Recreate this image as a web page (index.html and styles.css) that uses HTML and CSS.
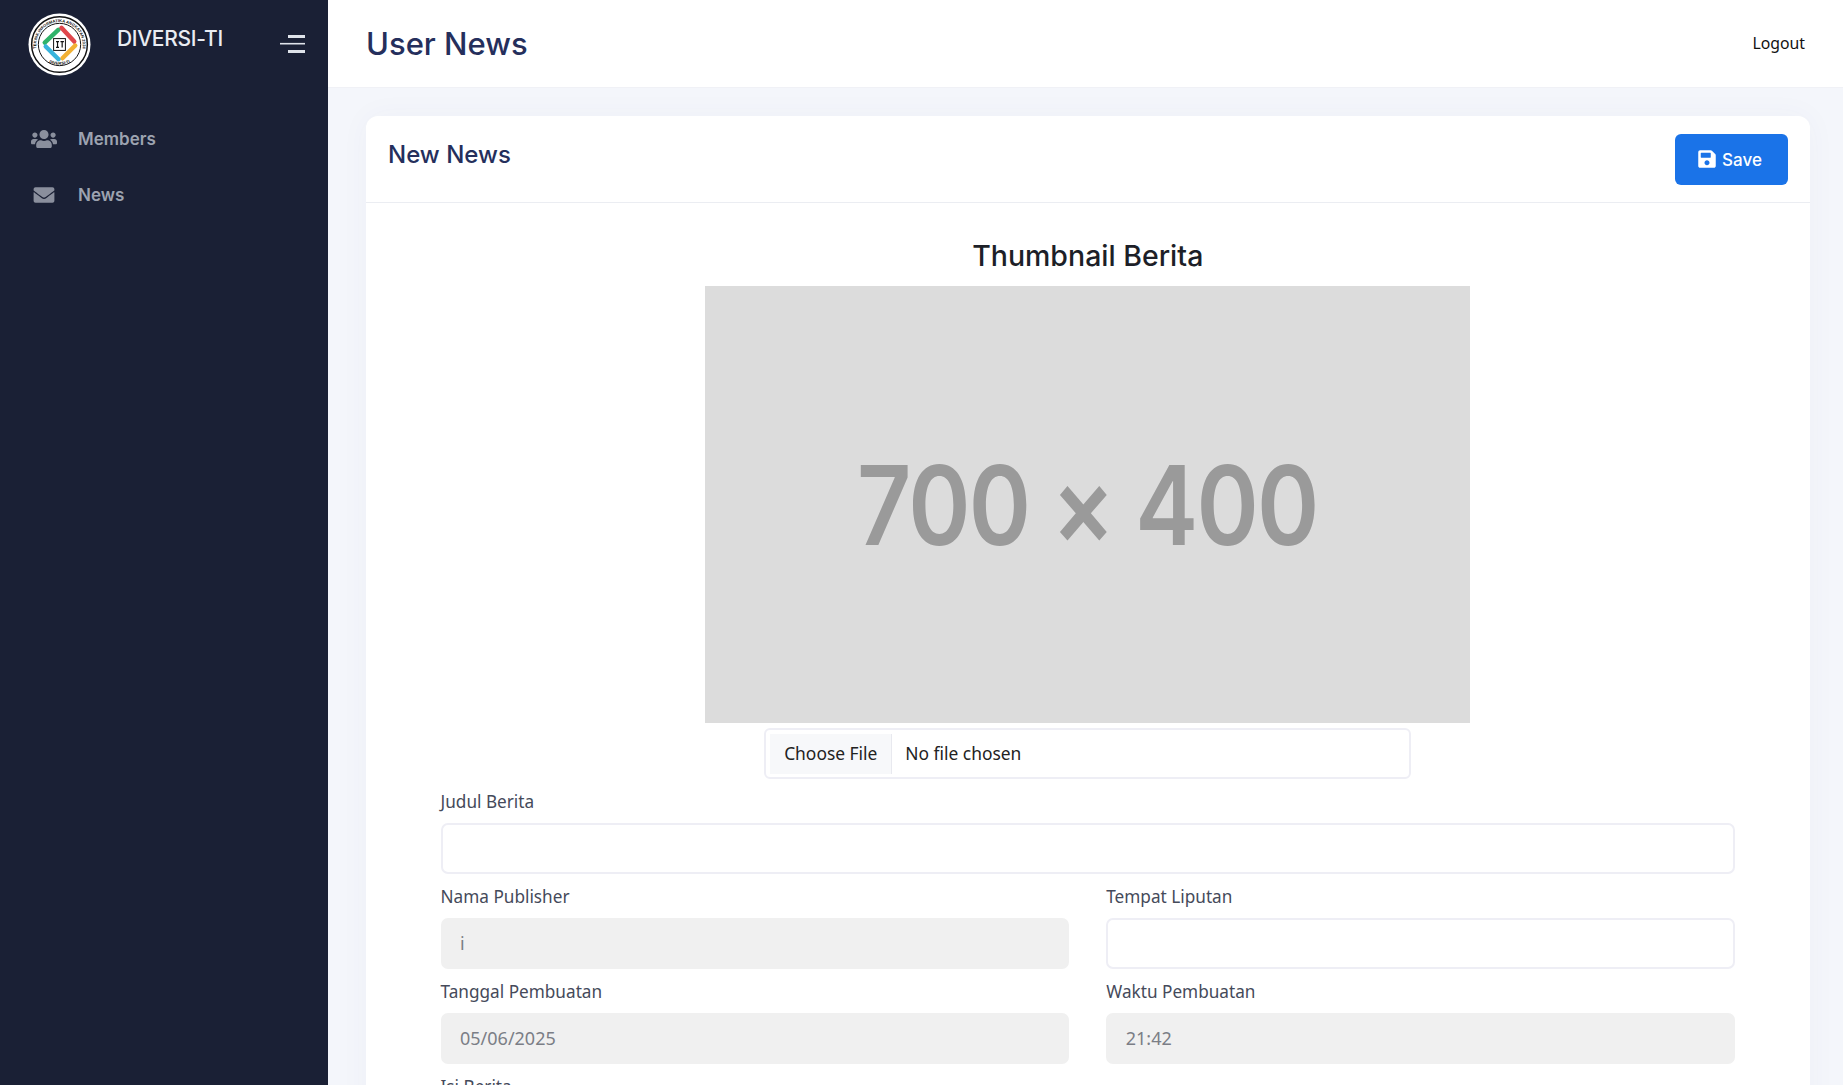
FILE: index.html
```html
<!DOCTYPE html>
<html lang="id">
<head>
<meta charset="utf-8">
<title>User News</title>
<link rel="stylesheet" href="styles.css">
</head>
<body>
<div class="app">
  <aside class="sidebar">
    <div class="brand">
      <svg class="logo" viewBox="0 0 64 64" aria-hidden="true">
        <defs>
          <path id="arcTop" d="M8.500 36A23.700 23.700 0 1 1 55.500 36"/>
          <path id="arcBottom" d="M14 46A28 28 0 0 0 50 46"/>
        </defs>
        <circle cx="32" cy="32" r="31.500" fill="#fff"/>
        <circle cx="32" cy="32" r="28.300" fill="none" stroke="#111" stroke-width="1.500"/>
        <circle cx="32" cy="32" r="21.500" fill="#fff" stroke="#111" stroke-width="1"/>
        <text class="logo-text"><textPath href="#arcTop" startOffset="50%" text-anchor="middle">TEKNIK INFORMATIKA ANGKATAN 2024</textPath></text>
        <text class="logo-text"><textPath href="#arcBottom" startOffset="50%" text-anchor="middle">DIVERSI-TI</textPath></text>
        <path d="M17 30 31 17" stroke="#2fb36a" stroke-width="4.500" stroke-linecap="round"/>
        <path d="M34 15 47 29" stroke="#e0474c" stroke-width="4.500" stroke-linecap="round"/>
        <path d="M48 33 35 46" stroke="#f2b134" stroke-width="4.500" stroke-linecap="round"/>
        <path d="M31 47 18 34" stroke="#38b4dc" stroke-width="4.500" stroke-linecap="round"/>
        <rect x="26" y="26" width="12" height="12" fill="#fff" stroke="#111"/>
        <path d="M28.500 29h3M30 29v6M28.500 35h3M33 29h3.500M34.700 29v6" stroke="#111" stroke-width="1.200" fill="none"/>
      </svg>
      <span class="brand-name">DIVERSI-TI</span>
      <svg class="toggle" viewBox="0 0 25 18" aria-hidden="true">
        <path d="M8 1.500h17M8 16.500h17" stroke="#dfe3ea" stroke-width="3"/>
        <path d="M0 8.700h25" stroke="#dfe3ea" stroke-width="1.600"/>
      </svg>
    </div>
    <nav class="nav">
      <a class="nav-item">
        <svg class="nav-icon" viewBox="0 0 640 512" aria-hidden="true"><path fill="currentColor" d="M96 224c35.300 0 64-28.700 64-64s-28.700-64-64-64-64 28.700-64 64 28.700 64 64 64zm448 0c35.300 0 64-28.700 64-64s-28.700-64-64-64-64 28.700-64 64 28.700 64 64 64zm32 32h-64c-17.600 0-33.500 7.100-45.100 18.600 40.300 22.100 68.900 62 75.100 109.400h66c17.700 0 32-14.300 32-32v-32c0-35.300-28.700-64-64-64zm-256 0c61.900 0 112-50.100 112-112S381.900 32 320 32 208 82.100 208 144s50.100 112 112 112zm76.800 32h-8.300c-20.800 10-43.900 16-68.500 16s-47.600-6-68.500-16h-8.300C179.600 288 128 339.600 128 403.200V432c0 26.500 21.500 48 48 48h288c26.500 0 48-21.500 48-48v-28.800c0-63.600-51.600-115.200-115.200-115.200zm-223.700-13.400C161.500 263.100 145.600 256 128 256H64c-35.300 0-64 28.700-64 64v32c0 17.700 14.300 32 32 32h65.900c6.300-47.400 34.900-87.300 75.200-109.400z"/></svg>
        <span>Members</span>
      </a>
      <a class="nav-item">
        <svg class="nav-icon" viewBox="-64 0 640 512" aria-hidden="true"><path fill="currentColor" d="M502.300 190.800c3.900-3.100 9.700-.2 9.700 4.700V400c0 26.500-21.500 48-48 48H48c-26.500 0-48-21.500-48-48V195.600c0-5 5.700-7.800 9.700-4.700 22.400 17.400 52.100 39.500 154.100 113.600 21.100 15.400 56.700 47.800 92.200 47.600 35.700.3 72-32.800 92.300-47.600 102-74.100 131.600-96.300 154-113.700zM256 320c23.200.4 56.600-29.200 73.400-41.400 132.700-96.300 142.800-104.700 173.400-128.700 5.800-4.500 9.200-11.500 9.200-18.900v-19c0-26.500-21.500-48-48-48H48C21.500 64 0 85.500 0 112v19c0 7.400 3.400 14.300 9.200 18.900 30.600 23.900 40.700 32.400 173.400 128.700 16.800 12.200 50.200 41.800 73.400 41.400z"/></svg>
        <span>News</span>
      </a>
    </nav>
  </aside>
  <div class="main">
    <header class="topbar">
      <h1 class="page-title">User News</h1>
      <a class="logout">Logout</a>
    </header>
    <main class="content">
      <section class="card">
        <div class="card-head">
          <h2 class="card-title">New News</h2>
          <button class="save" type="button">
            <svg class="save-icon" viewBox="0 0 448 512" aria-hidden="true"><path fill="currentColor" d="M433.900 129.900l-83.900-83.900A48 48 0 0 0 316.100 32H48C21.500 32 0 53.500 0 80v352c0 26.500 21.500 48 48 48h352c26.500 0 48-21.500 48-48V163.900a48 48 0 0 0-14.100-34zM224 416c-35.300 0-64-28.700-64-64 0-35.300 28.700-64 64-64s64 28.700 64 64c0 35.300-28.700 64-64 64zm96-304.500V212c0 6.600-5.400 12-12 12H76c-6.600 0-12-5.400-12-12V108c0-6.600 5.400-12 12-12h228.500c3.200 0 6.200 1.300 8.500 3.500l3.500 3.500c2.200 2.200 3.500 5.300 3.500 8.500z"/></svg>
            Save
          </button>
        </div>
        <div class="card-body">
          <div class="thumb">
            <h3 class="thumb-title">Thumbnail Berita</h3>
            <div class="placeholder"><span class="placeholder-text">700 × 400</span></div>
            <div class="file"><span class="file-btn">Choose File</span><span class="file-name">No file chosen</span></div>
          </div>
          <div class="form">
            <div class="field wide">
              <label class="label">Judul Berita</label>
              <div class="input"></div>
            </div>
            <div class="field">
              <label class="label">Nama Publisher</label>
              <div class="input off">i</div>
            </div>
            <div class="field">
              <label class="label">Tempat Liputan</label>
              <div class="input"></div>
            </div>
            <div class="field">
              <label class="label">Tanggal Pembuatan</label>
              <div class="input off">05/06/2025</div>
            </div>
            <div class="field">
              <label class="label">Waktu Pembuatan</label>
              <div class="input off">21:42</div>
            </div>
            <div class="field wide">
              <label class="label">Isi Berita</label>
              <div class="input tall"></div>
            </div>
          </div>
        </div>
      </section>
    </main>
  </div>
</div>
</body>
</html>
```

FILE: styles.css
```css
* { box-sizing: border-box; }
html, body { margin: 0; height: 100%; overflow: hidden; }
body { font-family: "Noto Sans", sans-serif; background: #f4f6fb; color: #2a2f45; font-size: 16px; }
.app { display: flex; height: 1085px; overflow: hidden; }
.sidebar { width: 328px; flex: none; background: #1a2035; color: #fff; }
.brand { height: 87px; display: flex; align-items: flex-start; padding: 13px 23px 0 28px; }
.logo { width: 63px; height: 63px; flex: none; }
.logo-text { font: 700 4.200px "Liberation Sans", sans-serif; fill: #111; }
.brand-name { margin: 14px 0 0 26px; font: 500 21px/24px Inter, sans-serif; color: #e9ecf2; letter-spacing: -.3px; }
.toggle { width: 25px; height: 18px; margin: 22px 0 0 auto; }
.nav { padding: 24px 0 0 31px; display: flex; flex-direction: column; }
.nav-item { height: 56px; display: flex; align-items: center; color: #9da3b0; font: 600 17px/24px Inter, sans-serif; }
.nav-icon { width: 26px; height: 24px; color: #8a8f9d; margin-right: 21px; flex: none; }
.main { flex: 1; min-width: 0; display: flex; flex-direction: column; }
.topbar { height: 88px; flex: none; background: #fff; display: flex; align-items: center; justify-content: space-between; padding: 1px 38px 0; border-bottom: 1px solid #f0f1f6; }
.page-title { margin: 0; font: 500 31px/40px Inter, sans-serif; color: #252f5c; }
.logout { font: 400 15.800px/24px "Noto Sans", sans-serif; color: #111; margin-top: -2px; }
.content { padding: 28px 33px 0 38px; }
.card { background: #fff; border-radius: 12px; box-shadow: 0 0 30px rgba(70,75,130,.04); }
.card-head { height: 87px; display: flex; align-items: flex-start; justify-content: space-between; padding: 18px 22px 0; border-bottom: 1px solid #ebedf2; }
.card-title { margin: 6px 0 0; font: 500 24px/30px Inter, sans-serif; color: #252f5c; }
.save { width: 113px; height: 51px; background: #1a73e8; color: #fff; border: 0; border-radius: 6px; padding: 0 3px 0 0; display: flex; align-items: center; justify-content: center; gap: 6px; font: 500 17px/24px Inter, sans-serif; }
.save-icon { width: 18px; height: 20px; margin-top: -2px; }
.card-body { padding: 35px 75px 0 74.500px; }
.thumb { display: flex; flex-direction: column; align-items: center; }
.thumb-title { margin: 0 0 12px; font: 500 28.500px/36px Inter, sans-serif; color: #1d1f28; }
.placeholder { width: 765px; height: 437px; background: #dcdcdc; color: #9a9a9a; display: flex; align-items: center; justify-content: center; }
.placeholder-text { display: inline-block; white-space: nowrap; font: 600 110px/1 Inter, sans-serif; letter-spacing: -2px; transform: scaleX(.858); }
.file { width: 647px; height: 51px; margin-top: 5px; border: 2px solid #eeeef5; border-radius: 6px; display: flex; align-items: center; padding: 0 4px; font: 400 17.400px/24px "Noto Sans", sans-serif; color: #222; }
.file-btn { width: 122px; height: 40px; padding-bottom: 2px; background: #f7f8fa; border-right: 1px solid #e8e9ef; display: flex; align-items: center; justify-content: center; }
.file-name { margin: -2px 0 0 13px; }
.form { display: grid; grid-template-columns: 1fr 1fr; column-gap: 37px; row-gap: 8px; margin-top: 8px; }
.wide { grid-column: 1 / -1; }
.label { display: block; height: 36px; font: 400 17.200px/29px "Noto Sans", sans-serif; color: #454a5a; }
.input { height: 51px; border: 2px solid #eeeef5; border-radius: 7px; padding: 0 17.500px 2px; display: flex; align-items: center; font: 400 18px/24px "Noto Sans", sans-serif; color: #7b7e86; background: #fff; }
.off { background: #f0f0f0; border-color: #f0f0f0; }
.tall { height: 120px; }
```
